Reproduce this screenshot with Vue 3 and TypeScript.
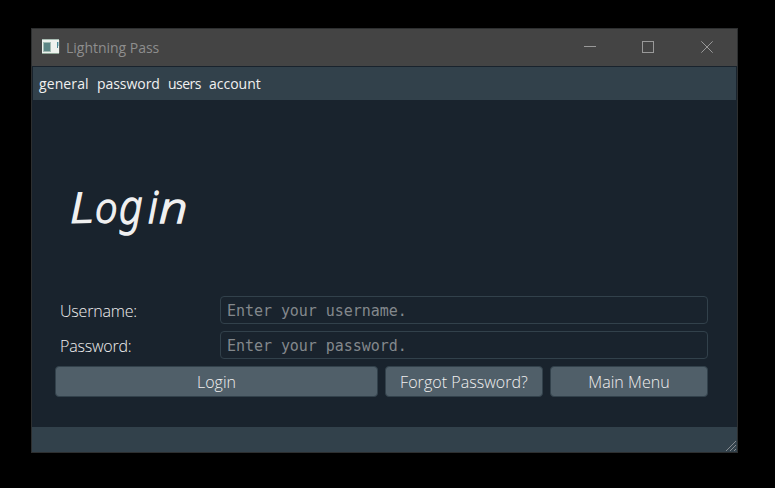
<script setup lang="ts">
import { reactive } from 'vue'

interface Field {
  key: 'username' | 'password'
  label: string
  type: string
}

const menus: string[] = ['general', 'password', 'users', 'account']
const fields: Field[] = [
  { key: 'username', label: 'Username:', type: 'text' },
  { key: 'password', label: 'Password:', type: 'password' },
]
const form = reactive({ username: '', password: '' })
</script>

<template>
  <main class="desktop">
    <section class="window">
      <header class="titlebar">
        <svg class="app-icon" width="18" height="15" viewBox="0 0 18 15" shape-rendering="crispEdges">
          <rect width="17" height="15" fill="#eef2ee" />
          <rect width="17" height="1" fill="#a9bdb3" />
          <rect y="14" width="17" height="1" fill="#8fa596" />
          <rect x="1" y="3" width="8" height="10" fill="#a3bbb3" />
          <rect x="2" y="4" width="6" height="8" fill="#5d8585" />
          <rect x="15" y="3" width="1" height="6" fill="#4f8a96" />
          <rect x="16" y="3" width="1" height="4" fill="#a8cbd0" />
          <rect x="17" y="1" width="1" height="13" fill="#5c5f5c" />
        </svg>
        <span class="title">Lightning Pass</span>
        <div class="controls">
          <svg width="12" height="12" viewBox="0 0 12 12"><path d="M0 5.5H12" /></svg>
          <svg width="12" height="12" viewBox="0 0 12 12"><rect x=".5" y=".5" width="11" height="11" /></svg>
          <svg width="12" height="12" viewBox="0 0 12 12"><path d="M.3 .3L11.7 11.7M11.7 .3L.3 11.7" /></svg>
        </div>
      </header>
      <nav class="menubar">
        <span v-for="m in menus" :key="m" :class="['menu', m]">{{ m }}</span>
      </nav>
      <div class="content">
        <h1><span class="cap">L</span><span class="o">o</span><span class="g">g</span><span class="i">i</span><span class="n">n</span></h1>
        <form @submit.prevent>
          <label v-for="f in fields" :key="f.key" class="row">
            <span :class="['label', f.key]">{{ f.label }}</span>
            <input v-model="form[f.key]" :type="f.type" :placeholder="`Enter your ${f.key}.`" />
          </label>
          <div class="buttons">
            <button type="submit">Login</button>
            <button type="button">Forgot Password?</button>
            <button type="button">Main Menu</button>
          </div>
        </form>
      </div>
      <footer class="statusbar">
        <svg width="12" height="12" viewBox="0 0 12 12">
          <path d="M1 11L11 1M5 11L11 5M9 11L11 9" />
        </svg>
      </footer>
    </section>
  </main>
</template>

<style>
body {
  background: #000;
}
</style>

<style scoped>
.desktop {
  box-sizing: border-box;
  width: 775px;
  height: 488px;
  padding: 28px 37px 35px 31px;
  background: #000;
  font-family: 'Open Sans', 'Noto Sans', sans-serif;
  overflow: hidden;
}
.window {
  box-sizing: border-box;
  width: 707px;
  height: 425px;
  border: 1px solid #2d2f30;
  background: #19232d;
  display: flex;
  flex-direction: column;
}
.titlebar {
  height: 37px;
  flex: none;
  background: #444;
  display: flex;
  align-items: center;
  padding-left: 10px;
  color: #8e8e8e;
}
.app-icon {
  margin: 0 6px 2px 0;
  flex: none;
}
.title {
  font-size: 14px;
  letter-spacing: -0.02px;
  white-space: nowrap;
}
.controls {
  margin-left: auto;
  display: grid;
  grid-template-columns: 58px 59px 12px;
  padding: 0 24px 1px 0;
}
.controls svg {
  display: block;
  fill: none;
  stroke: #999;
  stroke-width: 1;
}
.menubar {
  height: 33px;
  flex: none;
  margin: 1px 1px 0;
  background: #32414b;
  color: #f0f0f0;
  display: flex;
  align-items: center;
  padding-left: 6px;
  gap: 8px;
  font-size: 14px;
}
.menu {
  white-space: nowrap;
}
.menu.general {
  width: 50px;
  letter-spacing: 0.1px;
}
.menu.password {
  width: 63px;
  letter-spacing: -0.05px;
}
.menu.users {
  width: 33px;
  letter-spacing: -0.5px;
}
.menu.account {
  width: 53px;
}
.content {
  flex: 1;
  padding: 76px 29px 0 23px;
}
h1 {
  margin: 0 0 0 15px;
  height: 120px;
  line-height: 61px;
  font-family: 'Noto Sans', 'Open Sans', sans-serif;
  font-size: 42px;
  font-weight: 300;
  font-style: italic;
  color: #f0f0f0;
  -webkit-text-stroke: 1.3px #f0f0f0;
  white-space: nowrap;
}
h1 span {
  display: inline-block;
  transform-origin: 0 75%;
}
.cap {
  width: 25px;
  transform: scaleX(1.2) rotate(-2deg);
}
.o {
  width: 24px;
  transform: scaleX(0.95);
}
.g {
  width: 29px;
  transform: scale(0.98, 1.12);
}
h1 .g {
  transform-origin: 0 60%;
}
.i {
  width: 11px;
  transform: scaleY(1.04);
}
.n {
  transform: scaleX(1.2);
}
form {
  display: flex;
  flex-direction: column;
  gap: 7px;
}
.row {
  display: flex;
  align-items: center;
  height: 28px;
}
.label {
  box-sizing: border-box;
  width: 165px;
  padding: 2px 0 0 5px;
  font-size: 16px;
  font-weight: 300;
  line-height: 24px;
  letter-spacing: -0.2px;
  color: #f0f0f0;
}
input {
  box-sizing: border-box;
  width: 488px;
  height: 28px;
  margin: 0;
  padding: 1px 6px 0;
  border: 1px solid #32414b;
  border-radius: 4px;
  outline: none;
  background: #19232d;
  color: #f0f0f0;
  font-family: 'DejaVu Sans Mono', monospace;
  font-size: 15px;
  letter-spacing: -0.05px;
}
input::placeholder {
  color: #83888c;
  opacity: 1;
}
.buttons {
  display: grid;
  grid-template-columns: 323px 158px 158px;
  gap: 7px;
}
button {
  height: 31px;
  padding: 1px 0 0;
  border: 1px solid #32414b;
  border-radius: 4px;
  background: #505f69;
  color: #f0f0f0;
  font-family: inherit;
  font-size: 16px;
  font-weight: 300;
  letter-spacing: 0.05px;
  white-space: nowrap;
}
.statusbar {
  height: 25px;
  flex: none;
  background: #32414b;
  display: flex;
  justify-content: flex-end;
  align-items: flex-end;
}
.statusbar svg {
  display: block;
  fill: none;
  stroke: #858b90;
  stroke-width: 1;
}
</style>
